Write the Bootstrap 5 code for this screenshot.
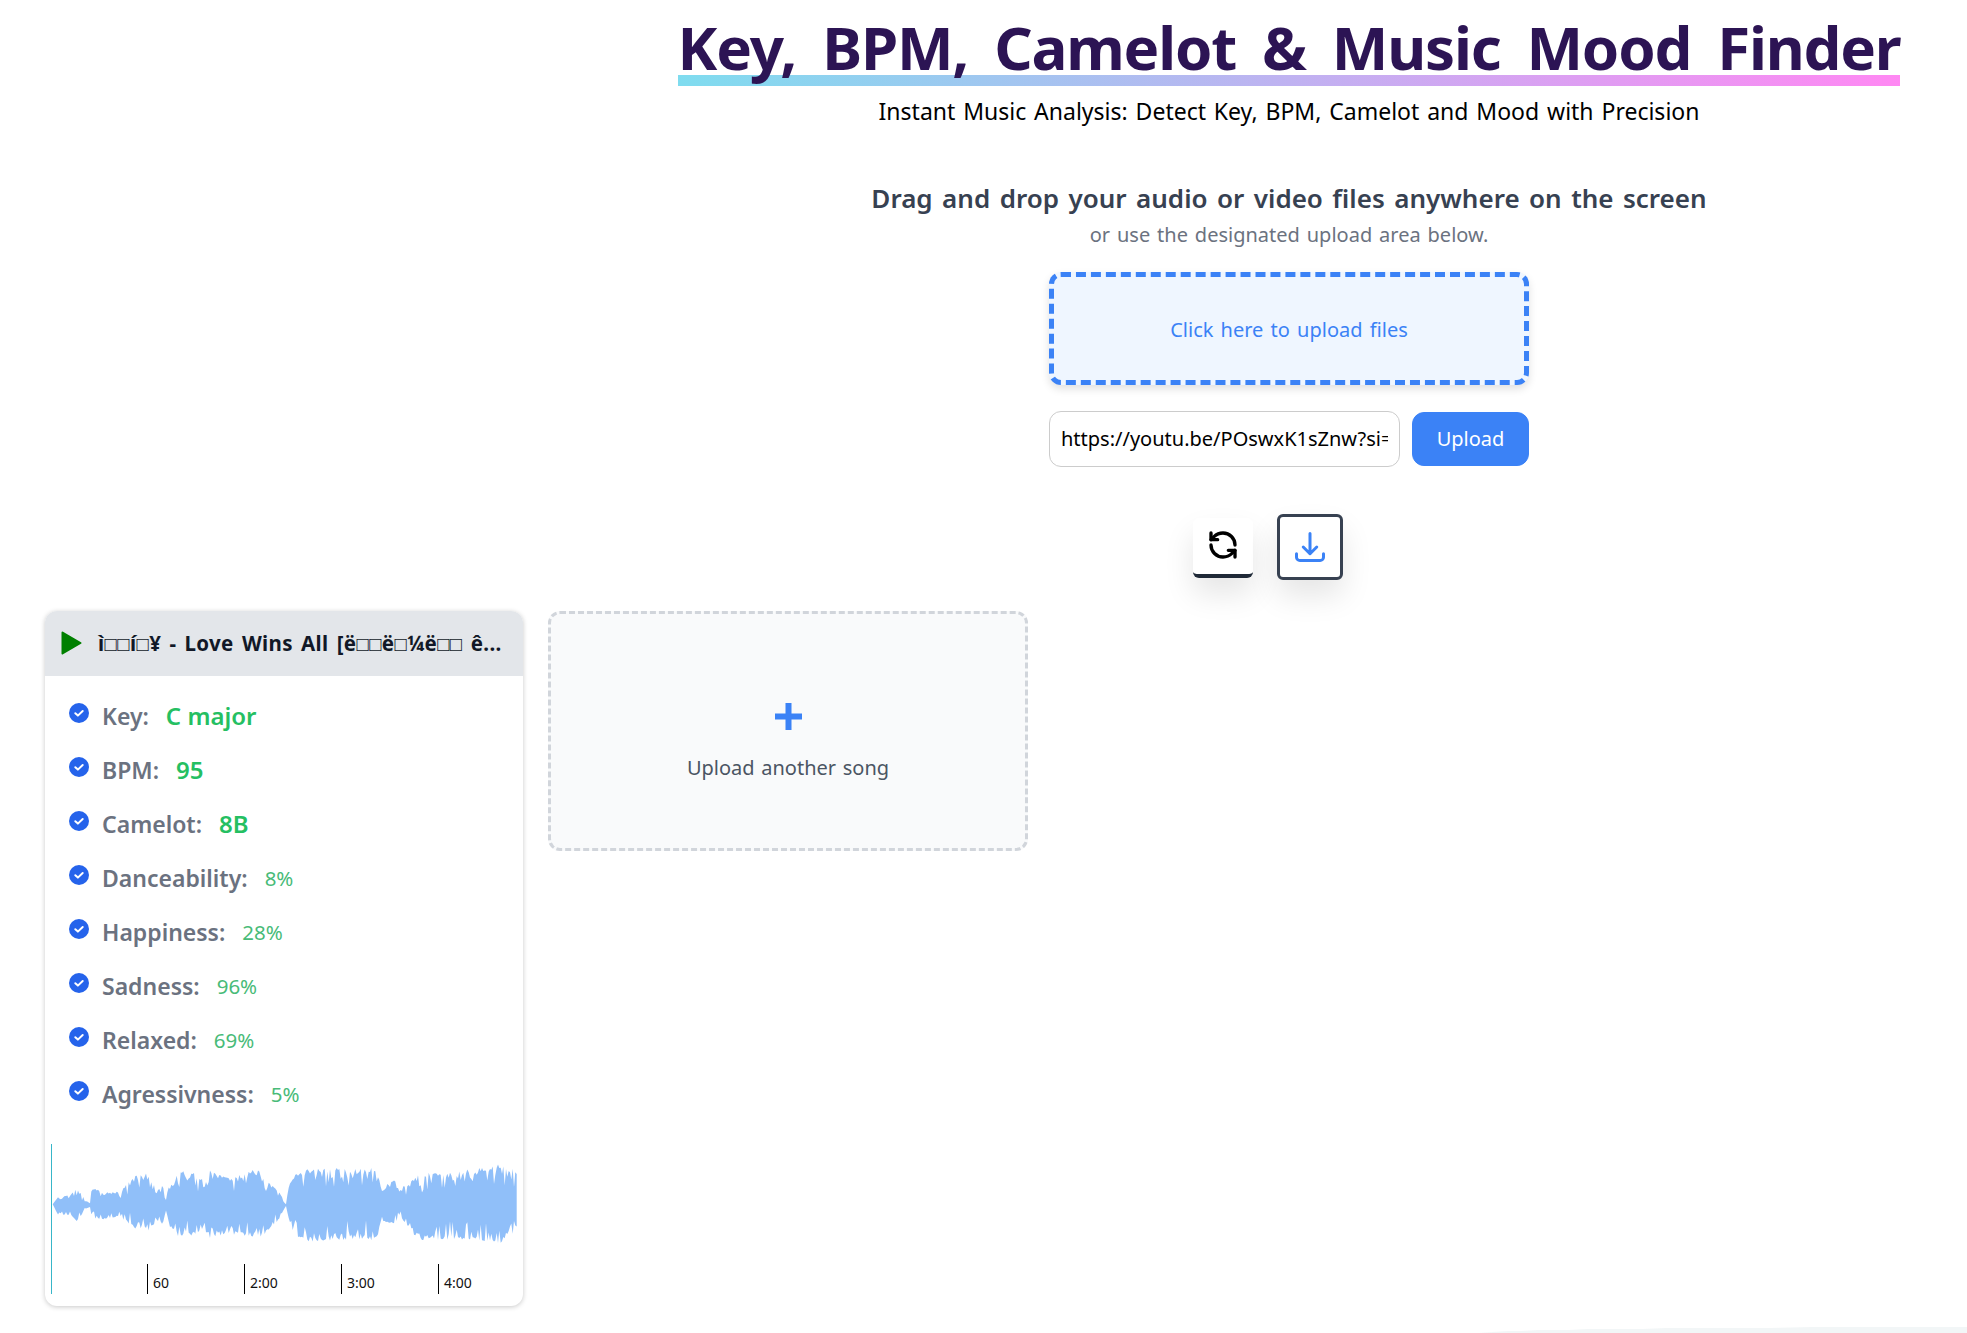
<!DOCTYPE html>
<html lang="en">
<head>
<meta charset="utf-8">
<title>Key, BPM, Camelot &amp; Music Mood Finder</title>
<link href="https://cdn.jsdelivr.net/npm/bootstrap@5.3.0/dist/css/bootstrap.min.css" rel="stylesheet">
<style>
html,body{height:100%}
body{font-family:"Noto Sans","Liberation Sans",sans-serif;color:#000;background:#fff radial-gradient(ellipse 490px 6px at 100% 100%,#f2f6f7 97%,rgba(255,255,255,0) 100%) no-repeat;overflow:hidden}
.top-col{margin-left:611px;padding-top:6px}
.app-title{box-sizing:border-box;font-size:60px;font-weight:700;line-height:69px;padding-top:7px;color:#2c1454;margin:0;letter-spacing:-1.2px;word-spacing:11.6px;background:linear-gradient(90deg,#7fdcef,#ff88f3) no-repeat 0 100%/100% 11px;height:80px;white-space:nowrap}
.app-sub{font-size:23px;line-height:32px;margin:9px 0 0;word-spacing:1.9px}
.drop-head{font-size:26px;font-weight:600;line-height:36px;color:#374151;margin:52.5px 0 0;word-spacing:2.7px}
.drop-sub{font-size:20px;line-height:28px;color:#6b7280;margin:5px 0 0;word-spacing:1.7px}
.drop-zone{width:480px;height:113px;margin-top:23px;padding-top:3px;border:5px dashed #3b82f6;border-radius:12px;background:#eff6ff;color:#3b82f6;font-size:20px;word-spacing:2px;box-shadow:0 4px 8px rgba(0,0,0,.12)}
.url-row{width:480px;margin-top:26px;gap:12px}
.url-input{width:351px;height:56px;flex:none;border:1px solid #ccc;border-radius:12px;padding:0 11px;font-size:20px;color:#000}
.up-btn{width:117px;height:54px;flex:none;border-radius:12px;background:#3b82f6;border-color:#3b82f6;color:#fff;font-size:20px}
.tool-row{gap:24px;margin-top:47px;padding-right:42px}
.tool-a,.tool-b{display:flex;align-items:center;justify-content:center;background:#fff;padding:0;box-shadow:0 16px 30px rgba(0,0,0,.1)}
.tool-a{width:60px;height:60px;margin-top:4px;border:0;border-bottom:4px solid #1f2937;border-radius:6px;padding-bottom:1px}
.tool-b{width:66px;height:66px;border:3px solid #374151;border-radius:6px}
.song-row{gap:25px;padding-left:45px;margin-top:31px;align-items:flex-start}
.song-card{width:478px;height:695px;border:0;border-radius:12px;box-shadow:0 1px 5px rgba(0,0,0,.22);overflow:hidden;background:#fff}
.song-head{height:65px;background:#e3e6ea;padding:0 16px;gap:16px;font-size:20.5px;font-weight:700;letter-spacing:.35px;word-spacing:2.5px;color:#111827;white-space:nowrap}
.stat-list{padding:25px 0 0 24px;gap:24px;margin:0;list-style:none}
.stat-item{height:30px;gap:13px;font-size:23px;line-height:30px}
.stat-name{font-weight:600;color:#6b7280}
.stat-big{font-size:24px;font-weight:600;color:#25bf62;margin-left:4px}
.stat-pct{font-size:20.5px;color:#48bb78;margin-left:4px}
.stat-tick{margin-top:-6px;flex:none}
.wave-box{display:block;margin:35px 0 0 6px}
.wave-box text{font-family:"Noto Sans","Liberation Sans",sans-serif;font-size:14px;fill:#111}
.add-card{width:480px;height:240px;border:3px dashed #d1d5db;border-radius:12px;background:#f9fafb;color:#4b5563;font-size:20px;word-spacing:1.5px;gap:23px;padding-top:25px}
</style>
</head>
<body>
<div class="top-col d-flex flex-column align-items-center">
  <h1 class="app-title">Key, BPM, Camelot &amp; Music Mood Finder</h1>
  <p class="app-sub">Instant Music Analysis: Detect Key, BPM, Camelot and Mood with Precision</p>
  <h2 class="drop-head">Drag and drop your audio or video files anywhere on the screen</h2>
  <p class="drop-sub">or use the designated upload area below.</p>
  <div class="drop-zone d-flex align-items-center justify-content-center">Click here to upload files</div>
  <div class="url-row d-flex align-items-center">
    <input class="url-input form-control" type="text" value="https://youtu.be/POswxK1sZnw?si=2x8fQ">
    <button class="up-btn btn" type="button">Upload</button>
  </div>
  <div class="tool-row d-flex align-items-start">
    <button class="tool-a" type="button" aria-label="Reset">
      <svg width="32" height="32" viewBox="0 0 24 24" fill="none" stroke="#000" stroke-width="2.5" stroke-linecap="round" stroke-linejoin="round"><path d="M21 12a9 9 0 0 0-9-9 9.75 9.75 0 0 0-6.74 2.74L3 8"/><path d="M3 3v5h5"/><path d="M3 12a9 9 0 0 0 9 9 9.75 9.75 0 0 0 6.74-2.74L21 16"/><path d="M16 16h5v5"/></svg>
    </button>
    <button class="tool-b" type="button" aria-label="Download">
      <svg width="36" height="36" viewBox="0 0 24 24" fill="none" stroke="#3b82f6" stroke-width="2" stroke-linecap="round" stroke-linejoin="round"><path d="M3 16.5v2.25A2.25 2.25 0 0 0 5.25 21h13.5A2.25 2.25 0 0 0 21 18.75V16.5M16.5 12 12 16.5m0 0L7.5 12m4.5 4.5V3"/></svg>
    </button>
  </div>
</div>
<div class="song-row d-flex">
  <div class="song-card card">
    <div class="song-head d-flex align-items-center">
      <svg width="21" height="24" viewBox="0 0 21 24"><path d="M1.5 1.5 19.5 12 1.5 22.5Z" fill="#008000" stroke="#008000" stroke-width="2" stroke-linejoin="round"/></svg>
      <span>ì□□í□¥ - Love Wins All [ë□□ë□¼ë□□ ê...</span>
    </div>
    <ul class="stat-list d-flex flex-column">
      <li class="stat-item d-flex align-items-center"><svg class="stat-tick" width="20" height="20" viewBox="0 0 20 20"><circle cx="10" cy="10" r="10" fill="#2563eb"/><path d="M6.3 10.2 8.9 12.6 13.7 8" fill="none" stroke="#fff" stroke-width="2" stroke-linecap="round" stroke-linejoin="round"/></svg><span class="stat-name">Key:</span><span class="stat-big">C major</span></li>
      <li class="stat-item d-flex align-items-center"><svg class="stat-tick" width="20" height="20" viewBox="0 0 20 20"><circle cx="10" cy="10" r="10" fill="#2563eb"/><path d="M6.3 10.2 8.9 12.6 13.7 8" fill="none" stroke="#fff" stroke-width="2" stroke-linecap="round" stroke-linejoin="round"/></svg><span class="stat-name">BPM:</span><span class="stat-big">95</span></li>
      <li class="stat-item d-flex align-items-center"><svg class="stat-tick" width="20" height="20" viewBox="0 0 20 20"><circle cx="10" cy="10" r="10" fill="#2563eb"/><path d="M6.3 10.2 8.9 12.6 13.7 8" fill="none" stroke="#fff" stroke-width="2" stroke-linecap="round" stroke-linejoin="round"/></svg><span class="stat-name">Camelot:</span><span class="stat-big">8B</span></li>
      <li class="stat-item d-flex align-items-center"><svg class="stat-tick" width="20" height="20" viewBox="0 0 20 20"><circle cx="10" cy="10" r="10" fill="#2563eb"/><path d="M6.3 10.2 8.9 12.6 13.7 8" fill="none" stroke="#fff" stroke-width="2" stroke-linecap="round" stroke-linejoin="round"/></svg><span class="stat-name">Danceability:</span><span class="stat-pct">8%</span></li>
      <li class="stat-item d-flex align-items-center"><svg class="stat-tick" width="20" height="20" viewBox="0 0 20 20"><circle cx="10" cy="10" r="10" fill="#2563eb"/><path d="M6.3 10.2 8.9 12.6 13.7 8" fill="none" stroke="#fff" stroke-width="2" stroke-linecap="round" stroke-linejoin="round"/></svg><span class="stat-name">Happiness:</span><span class="stat-pct">28%</span></li>
      <li class="stat-item d-flex align-items-center"><svg class="stat-tick" width="20" height="20" viewBox="0 0 20 20"><circle cx="10" cy="10" r="10" fill="#2563eb"/><path d="M6.3 10.2 8.9 12.6 13.7 8" fill="none" stroke="#fff" stroke-width="2" stroke-linecap="round" stroke-linejoin="round"/></svg><span class="stat-name">Sadness:</span><span class="stat-pct">96%</span></li>
      <li class="stat-item d-flex align-items-center"><svg class="stat-tick" width="20" height="20" viewBox="0 0 20 20"><circle cx="10" cy="10" r="10" fill="#2563eb"/><path d="M6.3 10.2 8.9 12.6 13.7 8" fill="none" stroke="#fff" stroke-width="2" stroke-linecap="round" stroke-linejoin="round"/></svg><span class="stat-name">Relaxed:</span><span class="stat-pct">69%</span></li>
      <li class="stat-item d-flex align-items-center"><svg class="stat-tick" width="20" height="20" viewBox="0 0 20 20"><circle cx="10" cy="10" r="10" fill="#2563eb"/><path d="M6.3 10.2 8.9 12.6 13.7 8" fill="none" stroke="#fff" stroke-width="2" stroke-linecap="round" stroke-linejoin="round"/></svg><span class="stat-name">Agressivness:</span><span class="stat-pct">5%</span></li>
    </ul>
    <svg class="wave-box" width="466" height="150" viewBox="0 0 466 150">
      <path id="wave" fill="#90bff9"/>
      <rect x="0" y="0" width="1" height="150" fill="#38b6c9"/>
      <g fill="#000">
        <rect x="96" y="120" width="1" height="30"/><rect x="193" y="120" width="1" height="30"/><rect x="290" y="120" width="1" height="30"/><rect x="387" y="120" width="1" height="30"/>
      </g>
      <text x="102" y="144">60</text><text x="199" y="144">2:00</text><text x="296" y="144">3:00</text><text x="393" y="144">4:00</text>
    </svg>
  </div>
  <div class="add-card d-flex flex-column align-items-center justify-content-center">
    <svg width="27" height="27" viewBox="0 0 27 27"><path d="M10.5 0h6v10.5H27v6H16.5V27h-6V16.5H0v-6h10.5Z" fill="#3b82f6"/></svg>
    <span>Upload another song</span>
  </div>
</div>
<script>
(function(){
  var e=[[65,250,250],[80,225,280],[120,222,280],[135,200,300],[165,240,262],[178,245,258],[182,205,290],[210,210,295],[270,215,285],[285,195,300],[320,165,320],[350,160,325],[380,210,295],[395,185,310],[405,235,270],[415,190,310],[440,155,340],[490,165,335],[520,180,325],[540,150,345],[590,175,330],[640,155,340],[680,155,345],[720,190,320],[745,215,290],[765,250,255],[775,190,300],[795,155,350],[900,150,355],[960,155,345],[1040,145,350],[1050,205,300],[1090,180,310],[1105,210,280],[1130,190,320],[1170,165,350],[1300,155,350],[1410,140,360],[1458,155,320]];
  function at(x,k){for(var i=1;i<e.length;i++){if(x<=e[i][0]){var t=(x-e[i-1][0])/(e[i][0]-e[i-1][0]);return e[i-1][k]+(e[i][k]-e[i-1][k])*t}}return e[e.length-1][k]}
  var seed=7;function r(){seed=(seed*16807)%2147483647;return seed/2147483647}
  var top=[],bot=[];
  for(var x=65;x<=1458;x+=4){
    var sx=(30+x/3-50).toFixed(1);
    var a=at(x,1),b=at(x,2),s=(b-a)/100;
    var n1=r(),n2=r();
    top.push(sx+" "+((a+(n1*n1*n1*n1*26+r()*8-5)*s)/3-23).toFixed(1));
    bot.unshift(sx+" "+((b-(n2*n2*n2*n2*26+r()*8-5)*s)/3-23).toFixed(1));
  }
  document.getElementById("wave").setAttribute("d","M"+top.concat(bot).join("L")+"Z");
})();
</script>
</body>
</html>
